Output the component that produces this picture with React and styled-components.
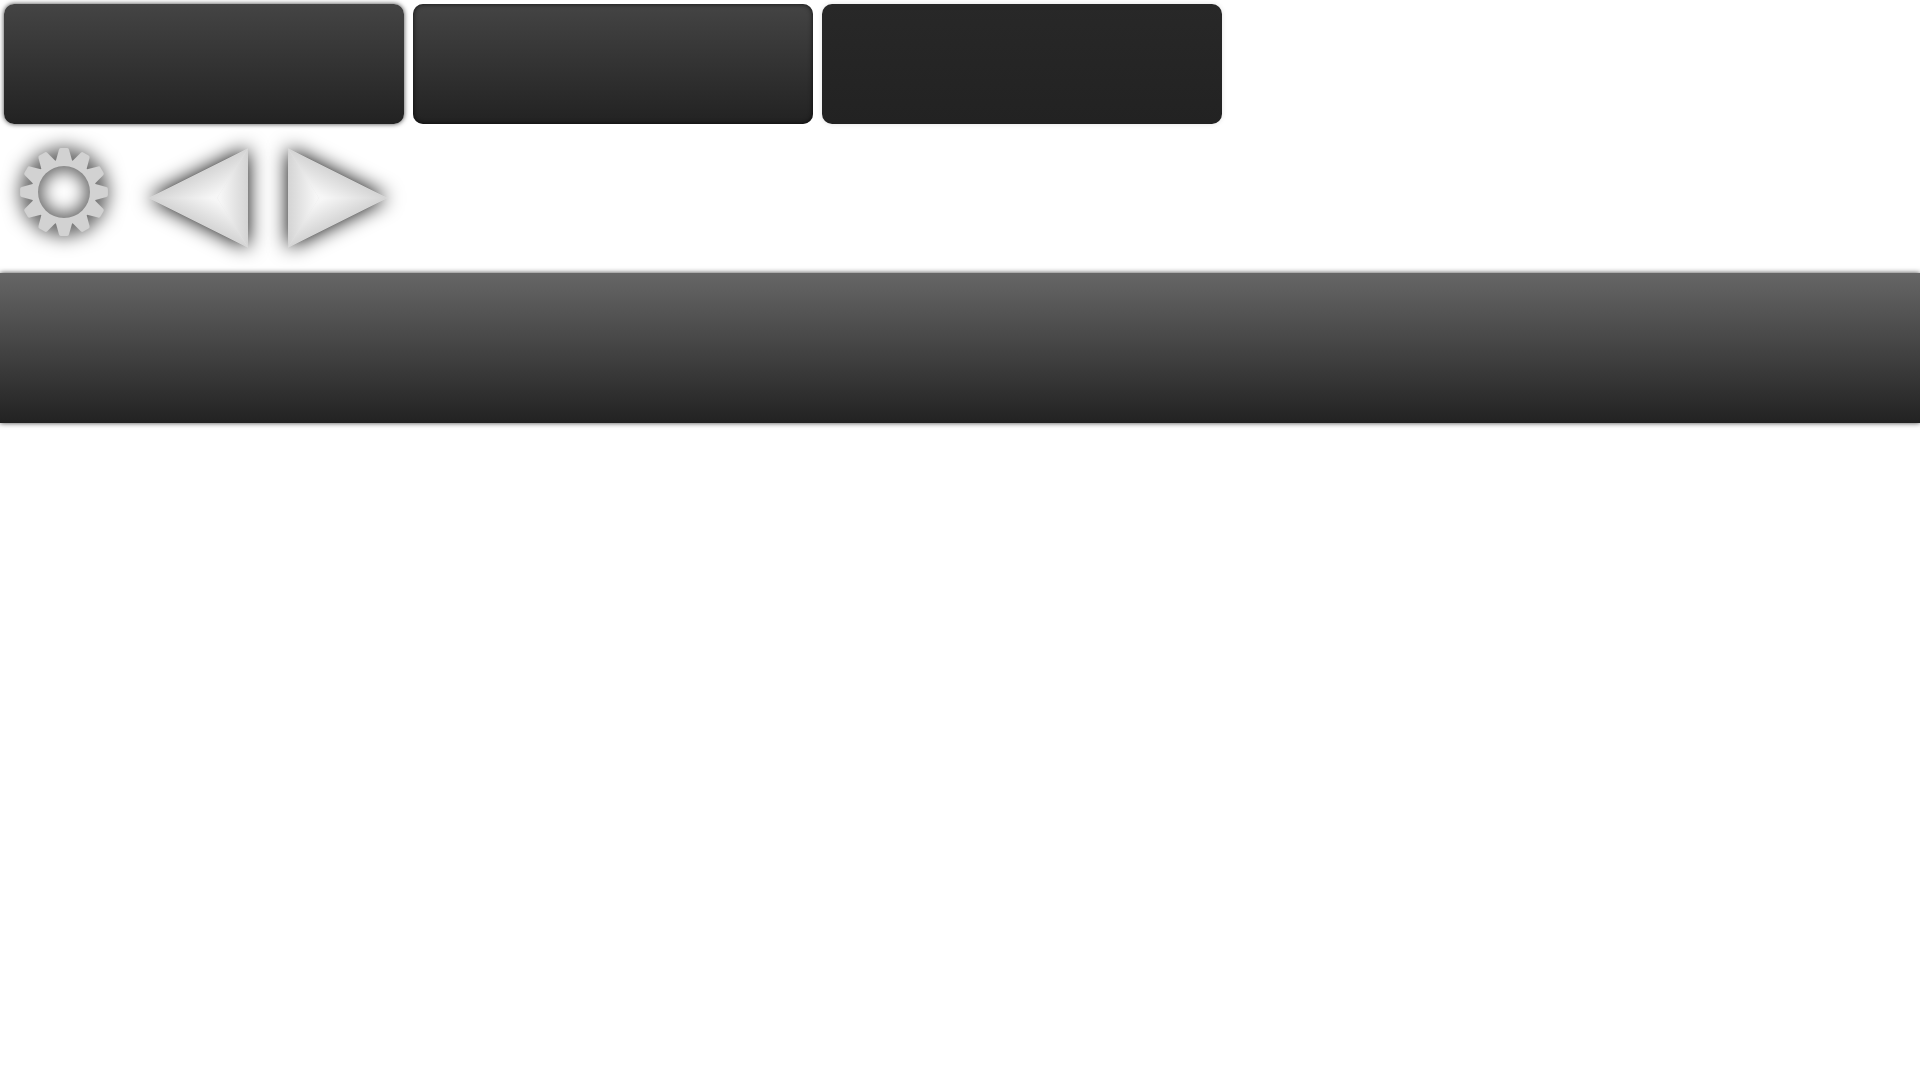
import React from "react";
import styled, { createGlobalStyle, css } from "styled-components";

const GlobalStyle = createGlobalStyle`
  body {
    margin: 0;
    background: #fff;
    font-family: "Liberation Sans", Arial, sans-serif;
    overflow-x: hidden;
  }
`;

const Page = styled.div`
  min-height: 100vh;
`;

const ButtonRow = styled.div`
  display: flex;
  flex-wrap: wrap;
  gap: 9px;
  padding: 4px;
`;

const looks = {
  raised: css`
    background: linear-gradient(#444, #222);
    box-shadow: 0 0 5px rgba(0, 0, 0, 0.75);
  `,
  hover: css`
    background: linear-gradient(#444, #222);
    box-shadow: inset 0 0 5px rgba(0, 0, 0, 0.75);
  `,
  pressed: css`
    background: linear-gradient(#282828, #222);
    box-shadow: 0 0 5px rgba(0, 0, 0, 0.12);
  `,
};

const PanelButton = styled.button`
  width: 400px;
  height: 120px;
  padding: 0;
  border: 0;
  border-radius: 10px;
  ${({ $look }) => looks[$look]}
`;

const IconRow = styled.div`
  display: flex;
  align-items: flex-start;
  gap: 40px;
  padding: 20px 20px 25px;
`;

const IconButton = styled.button`
  display: block;
  padding: 0;
  border: 0;
  background: none;
`;

const Icon = styled.svg`
  display: block;
  overflow: visible;
  filter: drop-shadow(0 0 10px #000);
`;

const Bar = styled.footer`
  height: 150px;
  background: linear-gradient(#666, #222);
  box-shadow: 0 0 5px rgba(0, 0, 0, 0.75);
`;

const TEETH = 12;

function gearPath() {
  const point = (radius, degrees) => {
    const a = (degrees * Math.PI) / 180;
    return `${(44 + radius * Math.sin(a)).toFixed(2)} ${(44 - radius * Math.cos(a)).toFixed(2)}`;
  };
  let d = "";
  for (let i = 0; i < TEETH; i += 1) {
    const a = (i * 360) / TEETH;
    d += `${i ? "L" : "M"}${point(32.4, a - 14.4)}`;
    d += `L${point(42.6, a - 6.8)}Q${point(44.2, a - 6)} ${point(44, a - 4)}`;
    d += `L${point(44, a + 4)}Q${point(44.2, a + 6)} ${point(42.6, a + 6.8)}`;
    d += `L${point(32.4, a + 14.4)}`;
  }
  return `${d}ZM70 44A26 26 0 1 0 18 44A26 26 0 1 0 70 44Z`;
}

function GearIcon() {
  return (
    <Icon width="88" height="88" viewBox="0 0 88 88" aria-hidden="true">
      <path d={gearPath()} fill="#d2d2d2" fillRule="evenodd" />
    </Icon>
  );
}

/* Each facet runs from one edge to the incentre and lightens inwards. */
function ArrowIcon({ id, flip }) {
  const stops = (
    <>
      <stop offset="0" stopColor="#d4d4d4" />
      <stop offset="0.6" stopColor="#ebebeb" />
      <stop offset="0.9" stopColor="#f6f6f6" />
      <stop offset="1" stopColor="#f7f7f7" />
    </>
  );
  return (
    <Icon width="100" height="100" viewBox="0 0 100 100" aria-hidden="true">
      <defs>
        <linearGradient id={`${id}-side`} gradientUnits="userSpaceOnUse" x1="0" y1="50" x2="30.9" y2="50">
          {stops}
        </linearGradient>
        <linearGradient id={`${id}-top`} gradientUnits="userSpaceOnUse" x1="44.7" y1="22.4" x2="30.9" y2="50">
          {stops}
        </linearGradient>
        <linearGradient id={`${id}-bottom`} gradientUnits="userSpaceOnUse" x1="44.7" y1="77.6" x2="30.9" y2="50">
          {stops}
        </linearGradient>
      </defs>
      <g transform={flip ? "matrix(-1 0 0 1 100 0)" : undefined}>
        <path d="M0 0.5L99 50L0 99.5Z" fill="#e4e4e4" />
        <path d="M0 0.5L30.9 50L0 99.5Z" fill={`url(#${id}-side)`} />
        <path d="M0 0.5L99 50H30.9Z" fill={`url(#${id}-top)`} />
        <path d="M0 99.5L99 50H30.9Z" fill={`url(#${id}-bottom)`} />
      </g>
    </Icon>
  );
}

export default function App() {
  return (
    <Page>
      <GlobalStyle />
      <main>
        <ButtonRow>
          <PanelButton type="button" $look="raised" />
          <PanelButton type="button" $look="hover" />
          <PanelButton type="button" $look="pressed" />
        </ButtonRow>
        <IconRow>
          <IconButton type="button" aria-label="Settings">
            <GearIcon />
          </IconButton>
          <IconButton type="button" aria-label="Previous">
            <ArrowIcon id="previous" flip />
          </IconButton>
          <IconButton type="button" aria-label="Next">
            <ArrowIcon id="next" />
          </IconButton>
        </IconRow>
      </main>
      <Bar />
    </Page>
  );
}
